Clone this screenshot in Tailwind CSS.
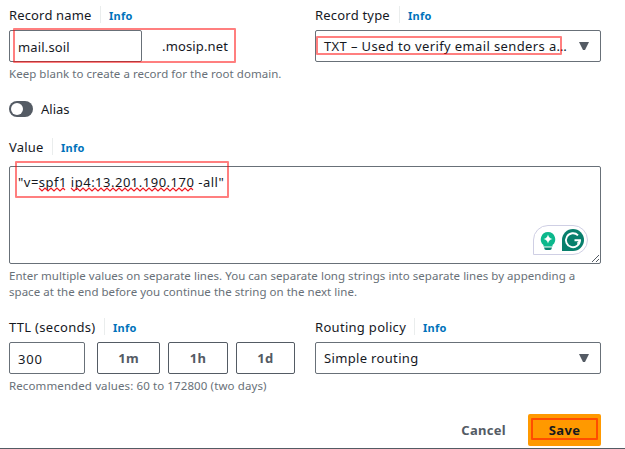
<!DOCTYPE html>
<html lang="en">
<head>
<meta charset="utf-8">
<title>Create record</title>
<script src="https://cdn.jsdelivr.net/npm/@tailwindcss/browser@4"></script>
</head>
<body class="bg-white">
<main class="relative flex h-[449px] w-[625px] flex-col overflow-hidden border-b border-[#545b64] bg-white pl-[9px] pr-6 pt-1.5 font-['Noto_Sans','Open_Sans',sans-serif] text-[13px] leading-[18px] text-[#16191f]">
  <div class="grid grid-cols-2 gap-x-5">
    <section>
      <div class="flex h-[17px] items-center whitespace-nowrap"><span class="w-[91px] tracking-[0.15px]">Record name</span><span class="h-[17px] border-l border-[#eaeded] pl-2 pt-px text-[11px] font-bold tracking-[0.25px] text-[#0073bb]">Info</span></div>
      <div class="relative mt-[7px] flex h-8 items-center whitespace-nowrap">
        <div class="flex h-8 w-[133px] items-center rounded-[2px] border border-[#687078] pl-2 pt-0.5 tracking-[0.15px]">mail.soil</div>
        <span class="ml-5 tracking-[0.15px]">.mosip.net</span>
        <div class="absolute -top-0.5 left-[4px] h-[35px] w-[223px] rounded-[1px] border-2 border-[#ff0000]/50"></div>
      </div>
      <p class="mt-1 h-4 whitespace-nowrap text-[11.5px] leading-4 tracking-[0.04px] text-[#687078]">Keep blank to create a record for the root domain.</p>
    </section>
    <section>
      <div class="flex h-[17px] items-center whitespace-nowrap"><span class="w-[84px] tracking-[0.2px]">Record type</span><span class="h-[17px] border-l border-[#eaeded] pl-2 pt-px text-[11px] font-bold tracking-[0.25px] text-[#0073bb]">Info</span></div>
      <div class="relative mt-[7px] flex h-8 items-center justify-between whitespace-nowrap rounded-[2px] border border-[#687078] pl-2 pr-[11px]">
        <span class="tracking-[0.38px]">TXT – Used to verify email senders a…</span>
        <svg class="h-2 w-2.5" viewBox="0 0 10 8"><path d="M0 0h10L6 8H4z" fill="#545b64"/></svg>
        <div class="absolute left-0 top-[5px] h-[19px] w-[246px] rounded-[1px] border-2 border-[#ff0000]/50"></div>
      </div>
    </section>
  </div>
  <div class="mt-[19px] flex h-4 items-center">
    <div class="flex h-4 w-6 items-center rounded-full bg-[#545b64] pl-0.5"><div class="size-3 rounded-full bg-white"></div></div>
    <span class="ml-2">Alias</span>
  </div>
  <div class="mt-[21px] flex h-[17px] items-center whitespace-nowrap"><span class="w-[43px] tracking-[0.2px]">Value</span><span class="h-[17px] border-l border-[#eaeded] pl-2 pt-px text-[11px] font-bold tracking-[0.25px] text-[#0073bb]">Info</span></div>
  <div class="relative mt-[11px] h-[98px] rounded-[2px] border border-[#687078] pl-2 pt-[6px]">
    <span class="whitespace-nowrap tracking-[0.5px]">"v=spf1 ip4:13.201.190.170 -all"</span>
    <div class="absolute -top-[6px] left-[5px] h-[37px] w-[214px] rounded-[1px] border-2 border-[#ff0000]/50"></div>
    <svg class="absolute left-[28px] top-[20px] h-[6px] w-[158px]" viewBox="0 0 158 6" fill="none" stroke="#ee1c24" stroke-width="1.200">
      <path d="M1 1l3 3 3-3 3 3 3-3 3 3 3-3 3 3 3-3 2 2M33 1l3 3 3-3 3 3 3-3 3 3 3-3 3 3 3-3 3 3 3-3 3 3 3-3 3 3 3-3 3 3 3-3 3 3 3-3 3 3 3-3 3 3 3-3 3 3 3-3 3 3 3-3 3 3 3-3 3 3 3-3 3 3 3-3 3 3 3-3 3 3 3-3 3 3 3-3 3 3 3-3 2 2"/>
    </svg>
    <svg class="absolute left-[523px] top-[58px] h-[31px] w-[56px]" viewBox="0 0 56 31">
      <path d="M.5 29.5V15A14.5 14.5 0 0 1 15 .5h25a14.5 14.5 0 0 1 0 29H.5z" fill="#fff" stroke="#cfcfe4"/>
      <path d="M15 7a7.300 7.300 0 0 0-4.500 13V21.500h9V20A7.300 7.300 0 0 0 15 7z" fill="#0cb88c"/>
      <path d="M11 22.500h8q-.5 2.500-2 2.500h-4q-1.500 0-2-2.500z" fill="#078571"/>
      <path d="M15 9.500q.8 3.700 4.500 4.500-3.700.8-4.500 4.500-.8-3.700-4.500-4.500 3.700-.8 4.500-4.500z" fill="#fff"/>
      <path d="M29 26V15a11 11 0 1 1 11 11z" fill="#087f6c"/>
      <path d="M45 10.300A7 7 0 1 0 47 15.300H41.500" fill="none" stroke="#fff" stroke-width="1.900"/>
      <path d="M47.300 15.300l-3 3.200" fill="none" stroke="#fff" stroke-width="1.300"/>
    </svg>
    <svg class="absolute bottom-0 right-0 h-[9px] w-[9px]" viewBox="0 0 9 9" stroke="#545b64" stroke-width="1"><path d="M1 8l7-7M5 8l3-3"/></svg>
  </div>
  <p class="mt-1 h-8 whitespace-nowrap text-[11.5px] leading-4 tracking-[0.03px] text-[#687078]">Enter multiple values on separate lines. You can separate long strings into separate lines by appending a<br>space at the end before you continue the string on the next line.</p>
  <div class="mt-[18px] grid grid-cols-2 gap-x-5">
    <section>
      <div class="flex h-[17px] items-center whitespace-nowrap"><span class="w-[95px] tracking-[0.3px]">TTL (seconds)</span><span class="h-[17px] border-l border-[#eaeded] pl-2 pt-px text-[11px] font-bold tracking-[0.25px] text-[#0073bb]">Info</span></div>
      <div class="mt-[7px] flex h-8 whitespace-nowrap">
        <div class="flex w-[76px] items-center rounded-[2px] border border-[#687078] pl-2 pt-0.5 tracking-[0.8px]">300</div>
        <button class="ml-3 w-[63px] rounded-[2px] border border-[#545b64] font-bold tracking-[0.3px] text-[#545b64]">1m</button>
        <button class="ml-2 w-[60px] rounded-[2px] border border-[#545b64] font-bold tracking-[0.3px] text-[#545b64]">1h</button>
        <button class="ml-2 w-[59px] rounded-[2px] border border-[#545b64] font-bold tracking-[0.3px] text-[#545b64]">1d</button>
      </div>
      <p class="mt-1 h-4 whitespace-nowrap text-[11.5px] leading-4 tracking-[0.11px] text-[#687078]">Recommended values: 60 to 172800 (two days)</p>
    </section>
    <section>
      <div class="flex h-[17px] items-center whitespace-nowrap"><span class="w-[99px] tracking-[0.3px]">Routing policy</span><span class="h-[17px] border-l border-[#eaeded] pl-2 pt-px text-[11px] font-bold tracking-[0.25px] text-[#0073bb]">Info</span></div>
      <div class="mt-[7px] flex h-8 items-center justify-between rounded-[2px] border border-[#687078] pl-2 pr-[11px]">
        <span class="tracking-[0.34px]">Simple routing</span>
        <svg class="h-2 w-2.5" viewBox="0 0 10 8"><path d="M0 0h10L6 8H4z" fill="#545b64"/></svg>
      </div>
    </section>
  </div>
  <div class="mt-5 flex h-8 items-center justify-end gap-[22px]">
    <button class="font-bold tracking-[0.3px] text-[#545b64]">Cancel</button>
    <button class="relative h-8 w-[73px] rounded-[2px] bg-[#ff9900] font-bold tracking-[0.4px]">Save<span class="absolute left-[3px] top-1 h-[22px] w-[67px] rounded-[1px] border-2 border-[#ff4d00]"></span></button>
  </div>
</main>
</body>
</html>
